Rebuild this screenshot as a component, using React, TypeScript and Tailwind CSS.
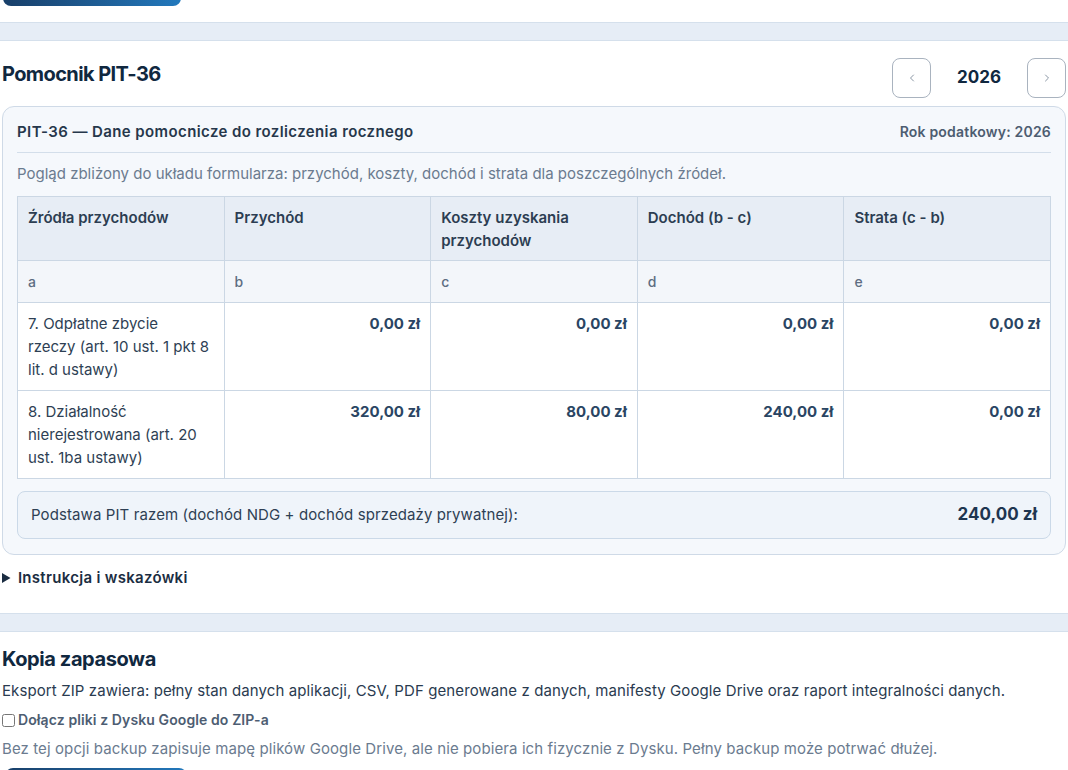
import { ChevronLeft, ChevronRight } from 'lucide-react';

const rows = [
  {
    label: ['7. Odpłatne zbycie', 'rzeczy (art. 10 ust. 1 pkt 8', 'lit. d ustawy)'],
    values: ['0,00 zł', '0,00 zł', '0,00 zł', '0,00 zł'],
  },
  {
    label: ['8. Działalność', 'nierejestrowana (art. 20', 'ust. 1ba ustawy)'],
    values: ['320,00 zł', '80,00 zł', '240,00 zł', '0,00 zł'],
  },
];

const headers = ['Źródła przychodów', 'Przychód', 'Koszty uzyskania przychodów', 'Dochód (b - c)', 'Strata (c - b)'];
const letters = ['a', 'b', 'c', 'd', 'e'];

function Band() {
  return <div className="h-[19px] w-full bg-[#e6edf6] border-y border-[#d5e0ec]" />;
}

export default function App() {
  return (
    <div
      className="h-[770px] w-[1068px] overflow-hidden bg-white text-[15px] text-[#22344a]"
      style={{ fontFamily: 'Inter, "Noto Sans", sans-serif' }}
    >
      {/* bottom of a button scrolled out of view */}
      <div className="h-[6px] overflow-hidden">
        <div className="-mt-[30px] ml-[3px] h-9 w-[178px] rounded-lg bg-gradient-to-r from-[#183f69] to-[#2279bd]" />
      </div>

      <div className="mt-4">
        <Band />
      </div>

      <section className="px-[2px]">
        <div className="flex items-start justify-between pt-[17px]">
          <h2 className="mt-[2px] text-[20px] font-bold leading-[28px] tracking-[-0.6px] text-[#10283f]">Pomocnik PIT-36</h2>
          <div className="flex items-center">
            <button className="flex h-10 w-[39px] items-center justify-center rounded-lg border border-[#a9b3bf] bg-white text-[#8a96a4]">
              <ChevronLeft className="h-3 w-3" strokeWidth={2} />
            </button>
            <span className="w-[96px] text-center text-[17px] font-bold text-[#10283f]">2026</span>
            <button className="flex h-10 w-[39px] items-center justify-center rounded-lg border border-[#a9b3bf] bg-white text-[#8a96a4]">
              <ChevronRight className="h-3 w-3" strokeWidth={2} />
            </button>
          </div>
        </div>

        <div className="mt-[8px] rounded-xl border border-[#cfdae7] bg-[#f5f8fc] px-[14px] pb-[15px] pt-[15px]">
          <div className="flex items-center justify-between border-b border-[#d3deea] pb-[10px] leading-[20px]">
            <span className="font-semibold tracking-[0.4px] text-[#26374b]">PIT-36 — Dane pomocnicze do rozliczenia rocznego</span>
            <span className="text-[14px] font-semibold tracking-[0.2px] text-[#4d5d71]">Rok podatkowy: 2026</span>
          </div>
          <p className="mt-[11px] leading-[20px] text-[#6b7b8f]">
            Pogląd zbliżony do układu formularza: przychód, koszty, dochód i strata dla poszczególnych źródeł.
          </p>

          <table className="mt-3 w-full table-fixed border-collapse leading-[23px]">
            <thead>
              <tr className="bg-[#e7edf5]">
                {headers.map((h) => (
                  <th
                    key={h}
                    className="border border-[#cbd7e4] px-[10px] pb-[8px] pt-[9px] text-left align-top font-semibold text-[#2c3d52]"
                  >
                    {h}
                  </th>
                ))}
              </tr>
              <tr className="bg-[#f3f6fa]">
                {letters.map((l) => (
                  <td key={l} className="border border-[#cbd7e4] px-[10px] py-[9px] text-[14px] font-medium text-[#5d6d82]">
                    {l}
                  </td>
                ))}
              </tr>
            </thead>
            <tbody>
              {rows.map((r) => (
                <tr key={r.label[0]} className="bg-white">
                  <td className="border border-[#cbd7e4] px-[10px] py-[9px] align-top text-[#2e3f54]">
                    {r.label.map((line) => (
                      <div key={line} className="whitespace-nowrap">{line}</div>
                    ))}
                  </td>
                  {r.values.map((v, i) => (
                    <td
                      key={i}
                      className="border border-[#cbd7e4] px-[10px] py-[9px] text-right align-top font-bold text-[#2a4563]"
                    >
                      {v}
                    </td>
                  ))}
                </tr>
              ))}
            </tbody>
          </table>

          <div className="mt-[12px] flex h-12 items-center justify-between rounded-lg border border-[#cbd9e8] bg-[#eff4fa] px-[13px]">
            <span className="tracking-[0.1px] text-[#2e3f54]">
              Podstawa PIT razem (dochód NDG + dochód sprzedaży prywatnej):
            </span>
            <span className="text-[17px] font-bold text-[#1e3550]">240,00 zł</span>
          </div>
        </div>

        <details className="mt-[12px]">
          <summary className="cursor-pointer leading-[22px] font-semibold tracking-[0.3px] text-[#1b2d42]">
            Instrukcja i wskazówki
          </summary>
        </details>
      </section>

      <div className="mt-[24px]">
        <Band />
      </div>

      <section className="px-[2px]">
        <h2 className="mt-[13px] text-[20px] font-bold leading-[28px] tracking-[-0.4px] text-[#10283f]">Kopia zapasowa</h2>
        <p className="mt-[7px] leading-[22px] tracking-[0.1px] text-[#2a3b50]">
          Eksport ZIP zawiera: pełny stan danych aplikacji, CSV, PDF generowane z danych, manifesty Google Drive oraz raport integralności danych.
        </p>
        <label className="mt-[7px] flex items-center gap-[3px] text-[14px] font-semibold leading-[22px] tracking-[0.1px] text-[#4d5d72]">
          <input type="checkbox" className="h-[13px] w-[13px]" />
          Dołącz pliki z Dysku Google do ZIP-a
        </label>
        <p className="mt-[7px] leading-[22px] tracking-[0.1px] text-[#6b7b8f]">
          Bez tej opcji backup zapisuje mapę plików Google Drive, ale nie pobiera ich fizycznie z Dysku. Pełny backup może potrwać dłużej.
        </p>
        <div className="ml-[3px] mt-2 h-9 w-[182px] rounded-lg bg-gradient-to-r from-[#183f69] to-[#2279bd]" />
      </section>
    </div>
  );
}
